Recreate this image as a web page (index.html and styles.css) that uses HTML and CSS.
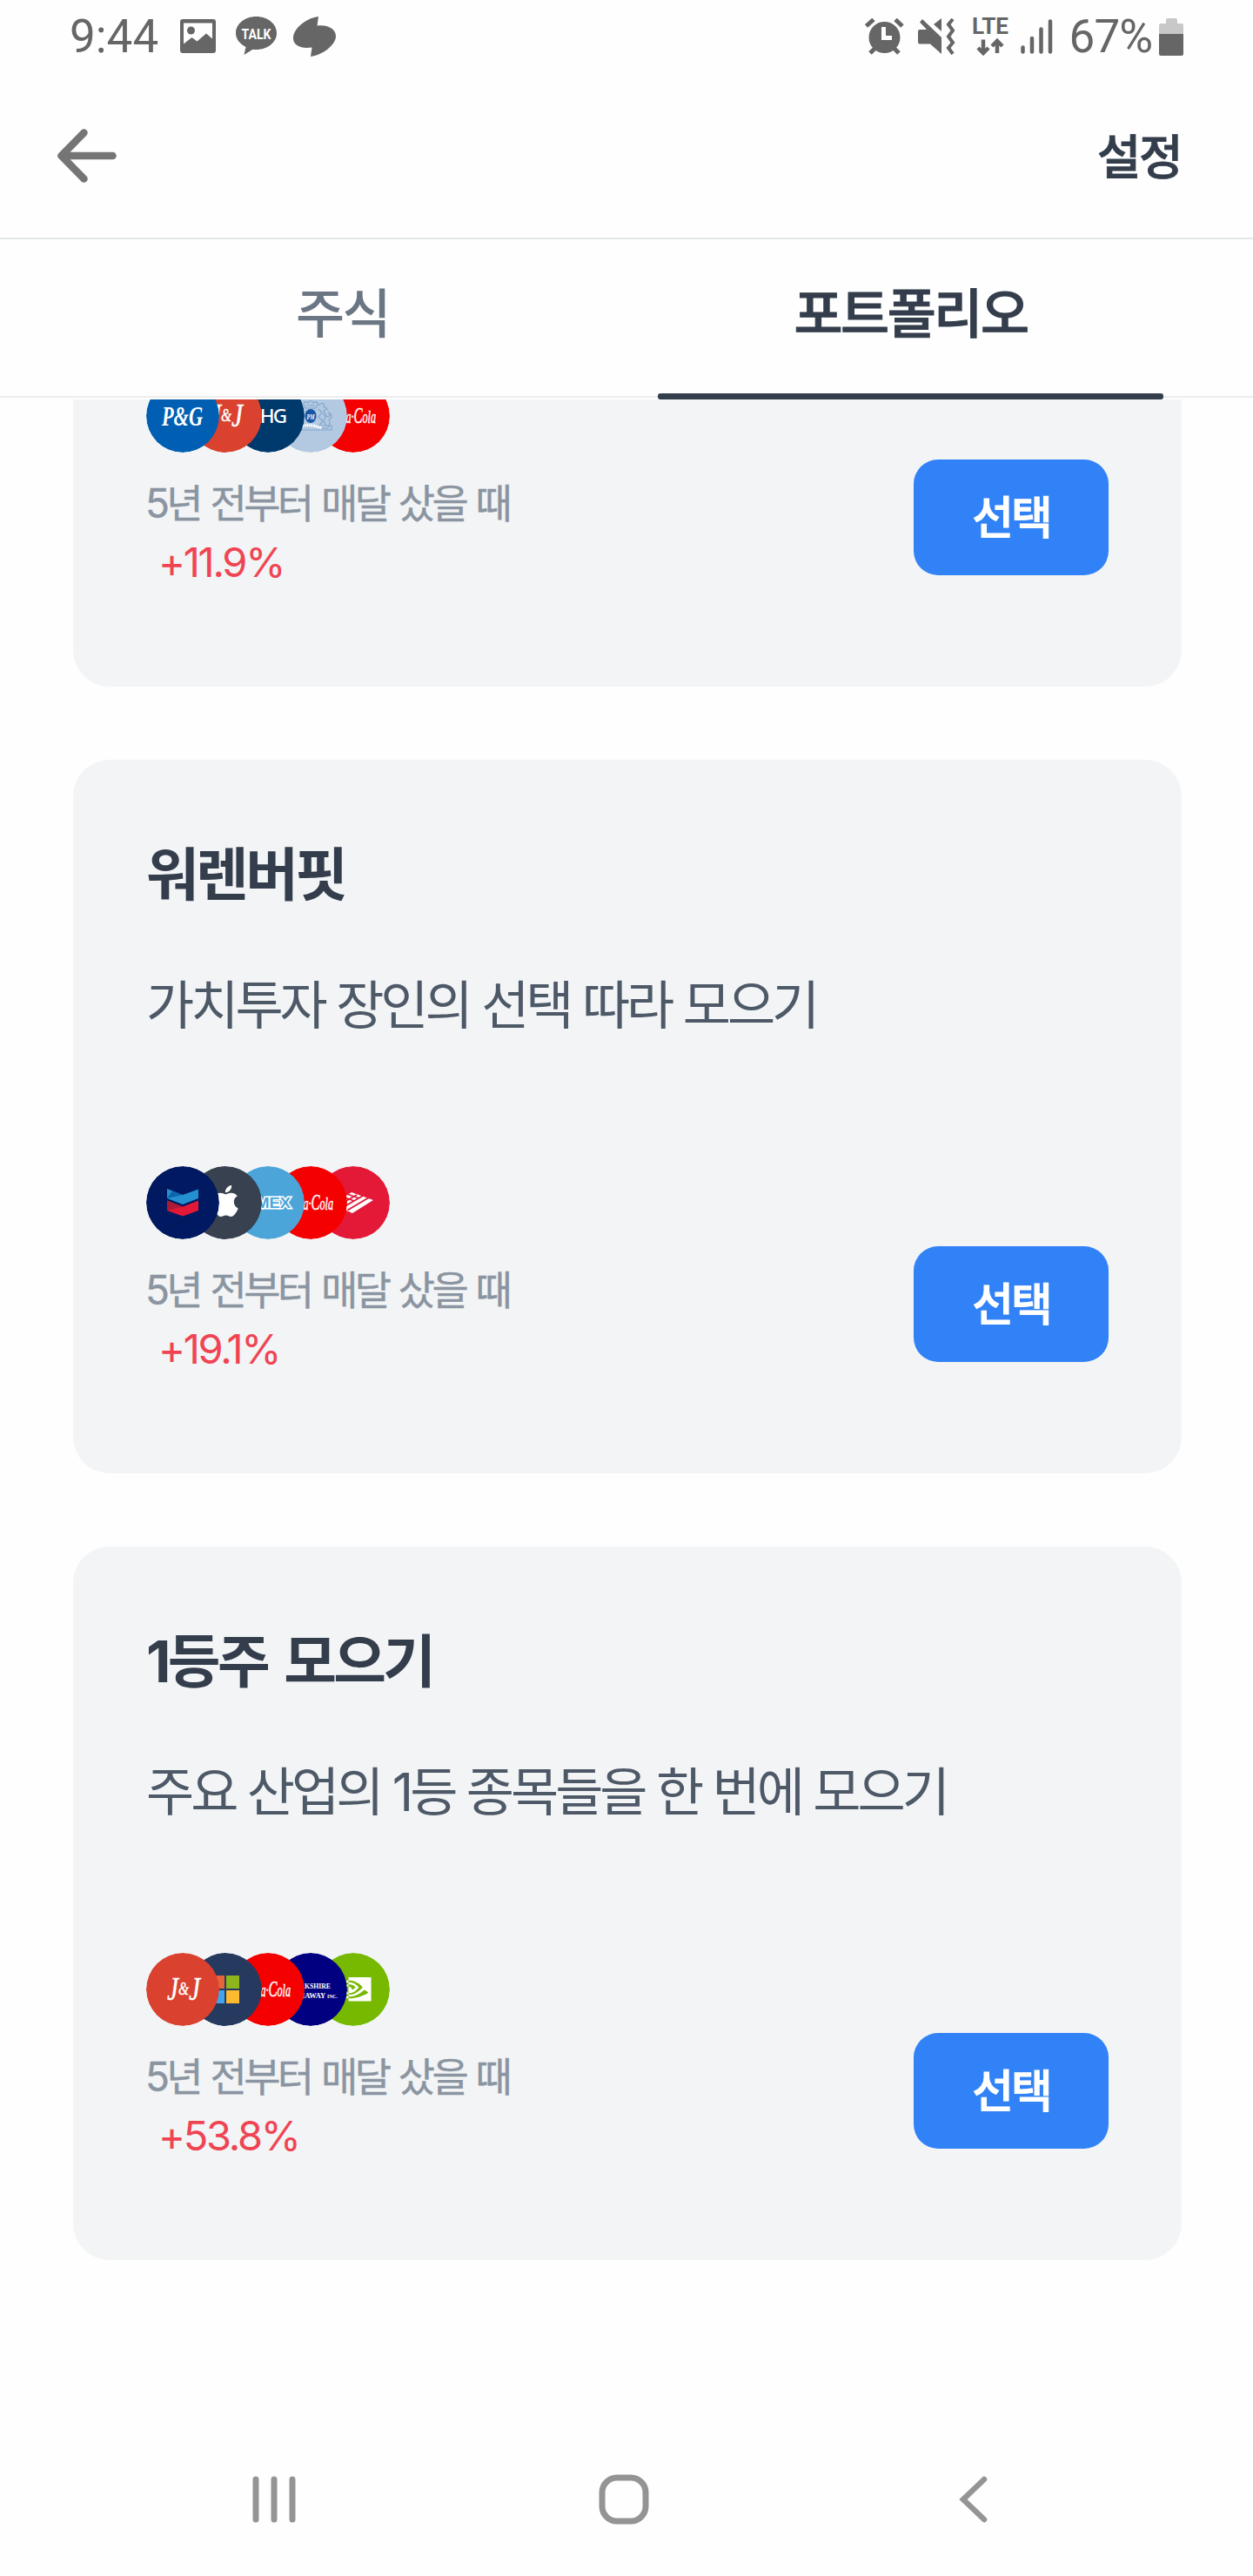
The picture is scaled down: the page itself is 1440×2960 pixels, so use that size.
FILE: index.html
```html
<!DOCTYPE html>
<html lang="ko">
<head>
    <meta charset="UTF-8">
    <meta name="viewport" content="width=device-width, initial-scale=1.0">
    <title>포트폴리오</title>
    <link rel="stylesheet" href="styles.css">
</head>
<body>
    <!-- Status bar -->
    <div class="status-bar">
        <div class="status-left">
            <span class="clock">9:44</span>
            <svg class="icon-image" width="41" height="40" viewBox="0 0 41 40">
                <path fill="#666" fill-rule="evenodd" d="M3 0h35a3 3 0 0 1 3 3v33a3 3 0 0 1-3 3H3a3 3 0 0 1-3-3V3a3 3 0 0 1 3-3zM4 4.500v24l9.500-7.500 6 4.500 10.500-9 7 6V4.500z"/>
                <circle cx="12.500" cy="13" r="4.500" fill="#666"/>
            </svg>
            <svg class="icon-talk" width="47" height="46" viewBox="0 0 47 46">
                <path fill="#666" d="M23.500 0C36.500 0 47 8.500 47 19S36.500 38 23.500 38q-2 0-4-.3L9.500 44l2-9C4.500 31.500 0 25.500 0 19 0 8.500 10.500 0 23.500 0z"/>
                <text x="6.500" y="26" fill="#fff" font-size="16.500" textLength="34" lengthAdjust="spacingAndGlyphs">TALK</text>
            </svg>
            <svg class="icon-leaf" width="49" height="46" viewBox="0 0 49 46">
                <path fill="#666" d="M29 0 27.500 10.500C39 9 49 14 49 22.500 49 32 35 44 20 46l1.500-10.500C9 37.500 0 33 0 25 0 14 14 2 29 0z"/>
            </svg>
        </div>
        <div class="status-right">
            <svg width="45" height="42" viewBox="0 0 45 42">
                <g stroke="#666" stroke-width="5" fill="none">
                    <path d="M1.500 9 10 1.500M35 1.500 43 9M6 40l7-7M39 40l-7-7"/>
                </g>
                <circle cx="22.500" cy="22" r="18" fill="#666"/>
                <path d="M21.500 10v12.500H31" stroke="#fff" stroke-width="5" fill="none"/>
            </svg>
            <svg class="icon-mute" width="43" height="42" viewBox="0 0 43 42">
                <path fill="#666" d="M2 13h8L2 4.500 5 1l22 21v19L14 29.500H2a2 2 0 0 1-2-2V15q0-2 2-2zM27 0v15l-9-8z"/>
                <path d="m40 1-5 6 5 7-5 7 5 7-5 6 5 7" fill="none" stroke="#666" stroke-width="4"/>
            </svg>
            <svg class="icon-lte" width="41" height="44" viewBox="0 0 41 44">
                <text x="-1" y="18.500" fill="#666" font-size="25" textLength="42" lengthAdjust="spacingAndGlyphs">LTE</text>
                <path d="M12 25.500V41M6 35l6 6 6-6M28 41V28M22 33l6-6 6 6" fill="none" stroke="#666" stroke-width="4.500"/>
            </svg>
            <svg class="icon-signal" width="37" height="40" viewBox="0 0 37 40">
                <path d="M2.500 32.500v5M13 22v15.500M23.500 11.500v26M34 2.500v35" stroke="#666" stroke-width="4.500" stroke-linecap="round"/>
            </svg>
            <span class="battery-level">67%</span>
            <svg width="28" height="43" viewBox="0 0 28 43">
                <path fill="#c8c8c8" d="M8 2q0-2 2-2h9q2 0 2 2v4h5q2 0 2 2v11H0V8q0-2 2-2h6z"/>
                <path fill="#666" d="M0 18h28v23q0 2-2 2H2q-2 0-2-2z"/>
            </svg>
        </div>
    </div>

    <!-- Header -->
    <header class="header">
        <svg width="68" height="62" viewBox="0 0 68 62">
            <path d="M30.500 4.500 4.500 31l26 26.500M4.500 31h59" fill="none" stroke="#757575" stroke-width="8.500" stroke-linecap="round" stroke-linejoin="round"/>
        </svg>
        <span class="settings">설정</span>
    </header>

    <nav class="tabs">
        <div class="tab">주식</div>
        <div class="tab active">포트폴리오</div>
    </nav>

    <!-- Portfolio cards -->
    <main class="list">
        <section class="card card-scrolled">
            <div class="card-footer">
                <div class="info">
                    <div class="logos">
                        <svg viewBox="0 0 84 84">
                            <circle cx="42" cy="42" r="42" fill="#005fb2"/>
                            <text class="serif-logo" x="18" y="53" font-size="32" textLength="47" lengthAdjust="spacingAndGlyphs">P&amp;G</text>
                        </svg>
                        <svg viewBox="0 0 84 84">
                            <circle cx="42" cy="42" r="42" fill="#da412e"/>
                            <text class="script" x="24" y="54" font-size="38" textLength="38" lengthAdjust="spacingAndGlyphs">J<tspan font-size="20" dy="-6">&amp;</tspan><tspan dy="6">J</tspan></text>
                        </svg>
                        <svg viewBox="0 0 84 84">
                            <circle cx="42" cy="42" r="42" fill="#003a6d"/>
                            <text class="sans-logo" x="18" y="50" font-size="22.500" textLength="46">UHG</text>
                        </svg>
                        <svg viewBox="0 0 84 84">
                            <circle cx="42" cy="42" r="42" fill="#b2c9e1"/>
                            <g fill="none" stroke="#84a6ce" stroke-width="1.200">
                                <path d="M36 33c-4-6-1-9 3-6 1-3 5-3 6 0 4-3 7 0 3 6zM37 30h10"/>
                                <path d="M51 30c4-5 8-2 6 1l4 3-4 2 3 6c3 2 5-1 3-4 4 2 4 6 0 8 2 4 0 8-2 10h-9M51 34l4 4-4 5 5 5-5 6M56 39l3 4-2 5 3 5"/>
                                <path d="M33 30c-4-5-8-2-6 1l-4 3 4 2-3 6c-3 2-5-1-3-4-4 2-4 6 0 8-2 4 0 8 2 10h9"/>
                                <path d="M16 53h50v5H16z"/>
                            </g>
                            <path d="M27 55q14-5 28 1" fill="none" stroke="#fff" stroke-width="3" stroke-dasharray="2 .6"/>
                            <ellipse cx="42" cy="42" rx="6.500" ry="8" fill="#1656a5"/>
                            <text class="serif-logo" x="37.500" y="46" font-size="9" textLength="9" lengthAdjust="spacingAndGlyphs">PM</text>
                        </svg>
                        <svg viewBox="0 0 84 84">
                            <circle cx="42" cy="42" r="42" fill="#f50000"/>
                            <text class="script" x="12" y="50" font-size="21" textLength="56" lengthAdjust="spacingAndGlyphs"><tspan font-size="26">C</tspan>oca·<tspan font-size="26">C</tspan>ola</text>
                        </svg>
                    </div>
                    <p class="period">5년 전부터 매달 샀을 때</p>
                    <p class="rate">+11.9%</p>
                </div>
                <button class="select-button">선택</button>
            </div>
        </section>

        <section class="card">
            <div>
                <h2>워렌버핏</h2>
                <p class="description">가치투자 장인의 선택 따라 모으기</p>
            </div>
            <div class="card-footer">
                <div class="info">
                    <div class="logos">
                        <svg viewBox="0 0 84 84">
                            <circle cx="42" cy="42" r="42" fill="#001960"/>
                            <path d="m24 26 18 7 18-6.500V37l-18 7-18-7z" fill="#2490d0"/>
                            <path d="m24 37 18-4-12-4.500z" fill="#0c65ad"/>
                            <path d="m24 39.500 18 7 18-7V51l-18 6.500L24 51z" fill="#e21836"/>
                            <path d="m24 39.500 18 7-18 4.500z" fill="#ad1a35"/>
                        </svg>
                        <svg viewBox="0 0 84 84">
                            <circle cx="42" cy="42" r="42" fill="#37414f"/>
                            <path fill="#fff" transform="translate(24 22) scale(1.5)" d="M12.152 6.896c-.948 0-2.415-1.078-3.960-1.040-2.040.027-3.910 1.183-4.961 3.014-2.117 3.675-.546 9.103 1.519 12.090 1.013 1.454 2.208 3.090 3.792 3.039 1.520-.065 2.090-.987 3.935-.987 1.831 0 2.350.987 3.960.948 1.637-.026 2.676-1.480 3.676-2.948 1.156-1.688 1.636-3.325 1.662-3.415-.039-.013-3.182-1.221-3.220-4.857-.026-3.040 2.480-4.494 2.597-4.559-1.429-2.090-3.623-2.324-4.390-2.376-2-.156-3.675 1.090-4.610 1.090zM15.530 3.830c.843-1.012 1.400-2.427 1.245-3.830-1.207.052-2.662.805-3.532 1.818-.780.896-1.454 2.338-1.273 3.714 1.338.104 2.715-.688 3.559-1.701"/>
                        </svg>
                        <svg viewBox="0 0 84 84">
                            <circle cx="42" cy="42" r="42" fill="#4ca5d8"/>
                            <text class="amex" x="15" y="47.500" font-size="17" textLength="53" lengthAdjust="spacingAndGlyphs">AMEX</text>
                        </svg>
                        <svg viewBox="0 0 84 84">
                            <circle cx="42" cy="42" r="42" fill="#f50000"/>
                            <text class="script" x="12" y="50" font-size="21" textLength="56" lengthAdjust="spacingAndGlyphs"><tspan font-size="26">C</tspan>oca·<tspan font-size="26">C</tspan>ola</text>
                        </svg>
                        <svg viewBox="0 0 84 84">
                            <circle cx="42" cy="42" r="42" fill="#e31937"/>
                            <path d="m40 30 25 9-24 15-23-10z" fill="#fff"/>
                            <path d="M35.500 50.500 60 36M29 48l24-14M23 46l23-13" stroke="#e31937" stroke-width="2"/>
                            <path d="m35 32 14 5M30 35l13 5" stroke="#e31937" stroke-width="1.500"/>
                        </svg>
                    </div>
                    <p class="period">5년 전부터 매달 샀을 때</p>
                    <p class="rate">+19.1%</p>
                </div>
                <button class="select-button">선택</button>
            </div>
        </section>

        <section class="card">
            <div>
                <h2>1등주 모으기</h2>
                <p class="description">주요 산업의 1등 종목들을 한 번에 모으기</p>
            </div>
            <div class="card-footer">
                <div class="info">
                    <div class="logos">
                        <svg viewBox="0 0 84 84">
                            <circle cx="42" cy="42" r="42" fill="#da412e"/>
                            <text class="script" x="24" y="54" font-size="38" textLength="38" lengthAdjust="spacingAndGlyphs">J<tspan font-size="20" dy="-6">&amp;</tspan><tspan dy="6">J</tspan></text>
                        </svg>
                        <svg viewBox="0 0 84 84">
                            <circle cx="42" cy="42" r="42" fill="#253a5e"/>
                            <path fill="#e6643a" d="M26 26h15v15H26z"/>
                            <path fill="#8fb51c" d="M43 26h15v15H43z"/>
                            <path fill="#41a5ee" d="M26 43h15v15H26z"/>
                            <path fill="#fdb930" d="M43 43h15v15H43z"/>
                        </svg>
                        <svg viewBox="0 0 84 84">
                            <circle cx="42" cy="42" r="42" fill="#f50000"/>
                            <text class="script" x="12" y="50" font-size="21" textLength="56" lengthAdjust="spacingAndGlyphs"><tspan font-size="26">C</tspan>oca·<tspan font-size="26">C</tspan>ola</text>
                        </svg>
                        <svg viewBox="0 0 84 84">
                            <circle cx="42" cy="42" r="42" fill="#000080"/>
                            <g class="berkshire">
                                <text x="19" y="41" font-size="8" textLength="46" lengthAdjust="spacingAndGlyphs">BERKSHIRE</text>
                                <text x="11" y="52" font-size="8" textLength="62" lengthAdjust="spacingAndGlyphs">HATHAWAY <tspan font-size="5.500">INC.</tspan></text>
                            </g>
                        </svg>
                        <svg viewBox="0 0 84 84">
                            <circle cx="42" cy="42" r="42" fill="#76b900"/>
                            <path fill="#fff" transform="translate(21 21) scale(1.73)" d="M8.948 8.798v-1.430a6.700 6.700 0 0 1 .424-.018c3.922-.124 6.493 3.374 6.493 3.374s-2.774 3.851-5.750 3.851c-.398 0-.787-.062-1.158-.185v-4.346c1.528.185 1.837.857 2.747 2.385l2.040-1.714s-1.492-1.952-4-1.952a6.016 6.016 0 0 0-.796.035m0-4.735v2.138l.424-.027c5.450-.185 9.010 4.470 9.010 4.470s-4.080 4.964-8.330 4.964c-.370 0-.733-.035-1.095-.097v1.325c.300.035.610.062.910.062 3.957 0 6.820-2.023 9.593-4.408.459.371 2.340 1.263 2.730 1.652-2.633 2.208-8.772 3.984-12.253 3.984-.335 0-.653-.018-.971-.053v1.864H24V4.063zm0 10.326v1.131c-3.657-.654-4.673-4.460-4.673-4.460s1.758-1.944 4.673-2.262v1.237H8.940c-1.528-.186-2.730 1.245-2.730 1.245s.680 2.412 2.739 3.110M2.456 10.900s2.164-3.197 6.500-3.533V6.201C4.153 6.590 0 10.653 0 10.653s2.350 6.802 8.948 7.420v-1.237c-4.840-.600-6.492-5.936-6.492-5.936z"/>
                        </svg>
                    </div>
                    <p class="period">5년 전부터 매달 샀을 때</p>
                    <p class="rate">+53.8%</p>
                </div>
                <button class="select-button">선택</button>
            </div>
        </section>
    </main>

    <!-- Android navigation bar -->
    <div class="nav-bar">
        <svg width="58" height="58" viewBox="0 0 58 58">
            <path d="M8 6v46M29 6v46M50 6v46" stroke="#949494" stroke-width="7" stroke-linecap="round"/>
        </svg>
        <svg width="58" height="58" viewBox="0 0 58 58">
            <rect x="4" y="4" width="50" height="50" rx="17" fill="none" stroke="#949494" stroke-width="7"/>
        </svg>
        <svg width="58" height="58" viewBox="0 0 58 58">
            <path d="M41 6 17 29l24 23" fill="none" stroke="#949494" stroke-width="6.500" stroke-linecap="round"/>
        </svg>
    </div>
</body>
</html>
```
FILE: styles.css
```css
* {
    margin: 0;
    padding: 0;
    box-sizing: border-box;
}

body {
    width: 1440px;
    height: 2960px;
    background-color: #fefefe;
    font-family: Inter, 'Noto Sans CJK KR', sans-serif;
    display: flex;
    flex-direction: column;
    overflow: hidden;
}

svg {
    display: block;
    flex-shrink: 0;
}

/* Status bar */
.status-bar {
    height: 84px;
    padding: 0 80px;
    display: flex;
    justify-content: space-between;
    align-items: center;
    color: #666;
    font-family: Roboto, sans-serif;
    font-size: 53px;
}

.status-left,
.status-right {
    display: flex;
    align-items: center;
}

.icon-image {
    margin-left: 25px;
}

.icon-talk {
    margin-left: 23px;
}

.icon-leaf {
    margin-left: 19px;
}

.icon-talk text,
.icon-lte text {
    font-family: Roboto, sans-serif;
    font-weight: bold;
}

.icon-mute {
    margin-left: 16px;
}

.icon-lte {
    margin-left: 20px;
}

.icon-signal {
    margin-left: 14px;
}

.battery-level {
    margin: 0 8px 0 19px;
    letter-spacing: -1px;
}

/* Header */
.header {
    height: 191px;
    padding: 0 83px 0 66px;
    border-bottom: 2px solid #e5e8e8;
    display: flex;
    justify-content: space-between;
    align-items: center;
}

.settings {
    padding-bottom: 6px;
    color: #333d4b;
    font-size: 55px;
    font-weight: 500;
    letter-spacing: -2.5px;
    -webkit-text-stroke: 0.8px #333d4b;
}

/* Tabs */
.tabs {
    height: 182px;
    padding: 0 67px;
    border-bottom: 2px solid #ededed;
    display: flex;
}

.tab {
    position: relative;
    flex: 1;
    line-height: 172px;
    text-align: center;
    color: #6b7684;
    font-size: 61px;
    font-weight: 500;
    letter-spacing: -2.5px;
}

.tab.active {
    color: #333d4b;
    -webkit-text-stroke: 1px #333d4b;
}

.tab.active::after {
    content: '';
    position: absolute;
    left: 36px;
    right: 36px;
    bottom: -4px;
    height: 7px;
    border-radius: 3px;
    background-color: #333d4b;
}

/* Portfolio cards */
.list {
    flex: 1;
    margin-top: 2px;
    padding: 0 82px 0 84px;
    display: flex;
    flex-direction: column;
    gap: 84px;
    overflow: hidden;
}

.card {
    height: 820px;
    padding: 84px 84px 106px;
    flex-shrink: 0;
    border-radius: 42px;
    background-color: #f2f4f6;
    display: flex;
    flex-direction: column;
    justify-content: space-between;
}

/* the first card is partly scrolled under the tabs */
.card-scrolled {
    height: 330px;
    padding-top: 0;
    border-radius: 0 0 42px 42px;
    justify-content: flex-end;
}

h2 {
    line-height: 96px;
    color: #333d4b;
    font-size: 66px;
    font-weight: 700;
    letter-spacing: -3.6px;
    word-spacing: 7px;
}

.description {
    margin-top: 50px;
    line-height: 104px;
    color: #4e5968;
    font-size: 60px;
    letter-spacing: -4px;
    word-spacing: 0.5px;
}

.card-footer {
    display: flex;
    justify-content: space-between;
    align-items: flex-end;
}

.logos {
    display: flex;
    margin-bottom: 23px;
}

.logos svg {
    width: 84px;
    height: 84px;
    margin-right: -35px;
    border-radius: 50%;
}

.logos svg:nth-child(1) { z-index: 5; }
.logos svg:nth-child(2) { z-index: 4; }
.logos svg:nth-child(3) { z-index: 3; }
.logos svg:nth-child(4) { z-index: 2; }

.script,
.serif-logo {
    fill: #fff;
    font-family: 'Liberation Serif', serif;
    font-style: italic;
    font-weight: bold;
}

.script {
    font-weight: normal;
    stroke: #fff;
    stroke-width: 0.5px;
}

.sans-logo {
    fill: #fff;
    font-family: 'Noto Sans', sans-serif;
    font-weight: 500;
}

.amex {
    fill: #4ca5d8;
    stroke: #fff;
    stroke-width: 3px;
    paint-order: stroke;
    font-family: 'Liberation Sans', sans-serif;
    font-weight: bold;
}

.berkshire {
    fill: #fff;
    font-family: 'Liberation Serif', serif;
    font-weight: bold;
}

.period {
    margin-left: -1px;
    line-height: 70px;
    color: #8b95a1;
    font-size: 46px;
    letter-spacing: -3.6px;
    word-spacing: 2px;
    -webkit-text-stroke: 0.4px #8b95a1;
}

.rate {
    margin: -2px 0 2px 14px;
    line-height: 70px;
    color: #f04452;
    font-size: 47px;
    letter-spacing: -2.3px;
}

.select-button {
    width: 224px;
    height: 133px;
    margin-bottom: 22px;
    padding-bottom: 6px;
    border: none;
    border-radius: 28px;
    background-color: #3182f6;
    color: #fff;
    font-family: inherit;
    font-size: 52px;
    font-weight: 500;
    letter-spacing: -3px;
    -webkit-text-stroke: 1px #fff;
}

/* Android navigation bar */
.nav-bar {
    height: 177px;
    padding-right: 7px;
    display: flex;
    justify-content: center;
    align-items: center;
    gap: 344px;
}
```
